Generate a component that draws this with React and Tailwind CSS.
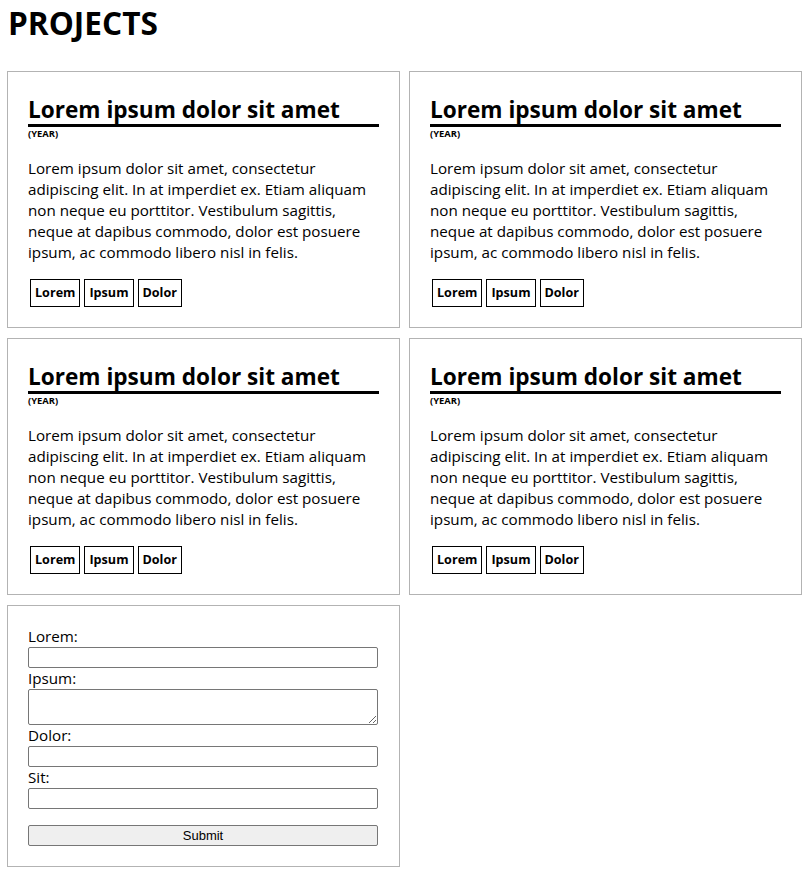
const body = "Lorem ipsum dolor sit amet, consectetur adipiscing elit. In at imperdiet ex. Etiam aliquam non neque eu porttitor. Vestibulum sagittis, neque at dapibus commodo, dolor est posuere ipsum, ac commodo libero nisl in felis.";

const tags = ['Lorem', 'Ipsum', 'Dolor'];

function ProjectCard() {
  return (
    <div className="border border-[#b3b3b3] p-5">
      <h2 className="pt-[3px] text-[22.6px] font-bold leading-[29px] border-b-[3px] border-black">
        Lorem ipsum dolor sit amet
      </h2>
      <div className="text-[9.4px] font-bold leading-[13px]">(YEAR)</div>
      <p className="mt-[18px] text-[15.2px] leading-[21px]">{body}</p>
      <div className="mt-4 flex pl-[2px] gap-1">
        {tags.map((t) => (
          <span
            key={t}
            className="border border-black px-[4px] py-1 text-[12.6px] font-bold leading-[18px]"
          >
            {t}
          </span>
        ))}
      </div>
    </div>
  );
}

function Field({ label, area }) {
  return (
    <>
      <label className="block text-[15.2px] leading-[21px]">{label}</label>
      {area ? (
        <textarea className="block w-[350px] h-[36px] border border-[#767676] rounded-[2px] bg-white" />
      ) : (
        <input
          type="text"
          className="block w-[350px] h-[21px] border border-[#767676] rounded-[2px] bg-white"
        />
      )}
    </>
  );
}

export default function App() {
  return (
    <div
      className="min-h-screen bg-white text-black px-[7px] pb-4"
      style={{ fontFamily: "'Open Sans', sans-serif" }}
    >
      <h1 className="pl-px pt-[3px] text-[31.6px] font-bold leading-[40px]">PROJECTS</h1>

      <div className="mt-[28px] grid grid-cols-[393px_393px] gap-x-[9px] gap-y-[10px]">
        <ProjectCard />
        <ProjectCard />
        <ProjectCard />
        <ProjectCard />

        <div className="border border-[#b3b3b3] p-5">
          <form onSubmit={(e) => e.preventDefault()}>
            <Field label="Lorem:" />
            <Field label="Ipsum:" area />
            <Field label="Dolor:" />
            <Field label="Sit:" />
            <button
              type="submit"
              className="mt-4 block w-[350px] h-[21px] border border-[#767676] rounded-[2px] bg-[#efefef] text-[13px] leading-[19px]"
              style={{ fontFamily: "'Liberation Sans', Arial, sans-serif" }}
            >
              Submit
            </button>
          </form>
        </div>
      </div>
    </div>
  );
}
